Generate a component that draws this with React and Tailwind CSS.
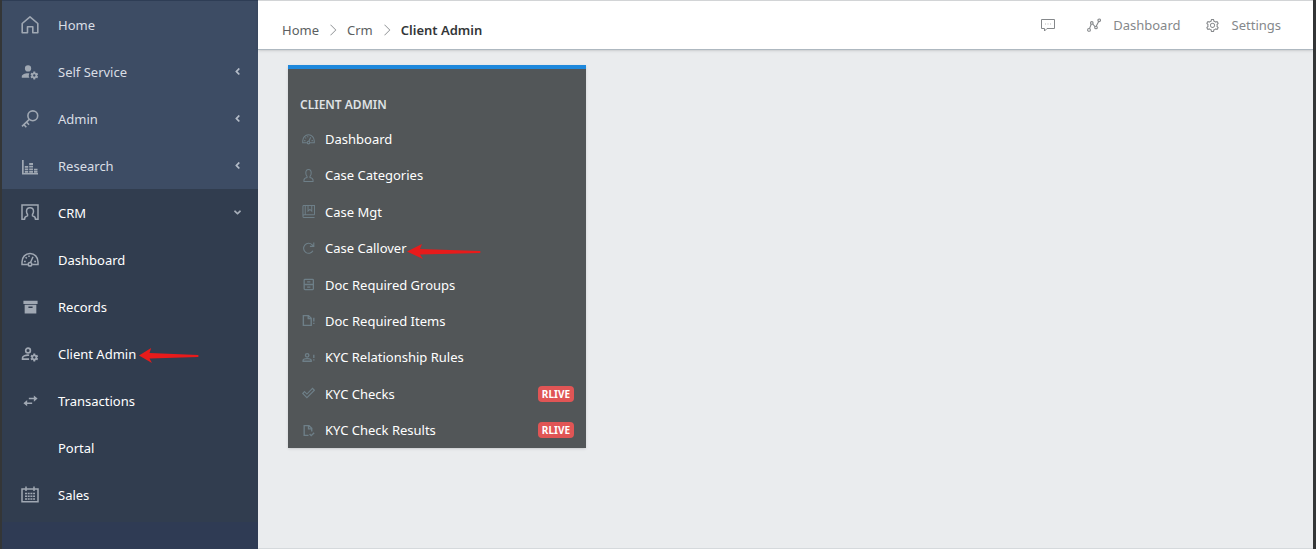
import React from "react";
import { TfiAngleRight } from "react-icons/tfi";
import { AiOutlineSetting } from "react-icons/ai";
import { FaAngleLeft, FaAngleDown } from "react-icons/fa";

const COG =
  "M17 12C16.87 12 16.76 12.09 16.74 12.21L16.55 13.53C16.25 13.66 15.96 13.82 15.7 14L14.46 13.5C14.35 13.5 14.22 13.5 14.15 13.63L13.15 15.36C13.09 15.47 13.11 15.6 13.21 15.68L14.27 16.5C14.25 16.67 14.24 16.83 14.24 17C14.24 17.17 14.25 17.33 14.27 17.5L13.21 18.32C13.12 18.4 13.09 18.53 13.15 18.64L14.15 20.37C14.21 20.5 14.34 20.5 14.46 20.5L15.7 20C15.96 20.18 16.24 20.35 16.55 20.47L16.74 21.79C16.76 21.91 16.86 22 17 22H19C19.11 22 19.22 21.91 19.24 21.79L19.43 20.47C19.73 20.34 20 20.18 20.27 20L21.5 20.5C21.63 20.5 21.76 20.5 21.83 20.37L22.83 18.64C22.89 18.53 22.86 18.4 22.77 18.32L21.7 17.5C21.72 17.33 21.74 17.17 21.74 17C21.74 16.83 21.73 16.67 21.7 16.5L22.76 15.68C22.85 15.6 22.88 15.47 22.82 15.36L21.82 13.63C21.76 13.5 21.63 13.5 21.5 13.5L20.27 14C20 13.82 19.73 13.65 19.42 13.53L19.23 12.21C19.22 12.09 19.11 12 19 12H17M18 15.5C18.83 15.5 19.5 16.17 19.5 17C19.5 17.83 18.83 18.5 18 18.5C17.16 18.5 16.5 17.83 16.5 17C16.5 16.17 17.17 15.5 18 15.5Z";

const Home = ({ className }) => (
  <svg viewBox="0 0 18 18" className={className} fill="none" stroke="currentColor" strokeWidth="1.6" strokeLinejoin="round">
    <path d="M1.200 7.500 9 .9l7.800 6.600v9.300h-5v-6H6.500v6H1.200z" />
  </svg>
);

const Key = ({ className }) => (
  <svg viewBox="0 0 18 18" className={className} fill="none" stroke="currentColor" strokeWidth="1.600">
    <circle cx="11.800" cy="5.800" r="4.900" />
    <path d="M8.300 9.400 1 16.300M2.800 14.500l2.500 2.700M5.500 12l2.500 2.700" />
  </svg>
);

const Gauge = ({ className }) => (
  <svg viewBox="0 0 18 18" className={className} fill="none" stroke="currentColor" strokeWidth="1.500">
    <path d="M6.800 13.500H1V11C1 6 4.500 2.500 9 2.500s8 3.500 8 8.500v2.500h-5.800" />
    <circle cx="9" cy="13.300" r="1.800" />
    <path d="M9.500 11.500 12 5.800M3 10.500h1.800M13.200 10.500H15M4.600 6.300l1.200 1.100M8 4.500V6" />
  </svg>
);

const Calendar = ({ className }) => (
  <svg viewBox="0 0 18 18" className={className} fill="none" stroke="currentColor" strokeWidth="1.500">
    <path d="M1 3h16v12.800H1zM5 .5v4.500M13 .5v4.500" />
    <path d="M4 7.500h10M4 10.200h10M4 12.900h10" strokeWidth="1.500" strokeDasharray="2 .7" />
  </svg>
);

const Archive = ({ className }) => (
  <svg viewBox="0 0 18 18" className={className} fill="currentColor">
    <path d="M.5 2h17v4H.5zM2 6.800h14V17.500H2zM6.500 9v1.700h5V9z" fillRule="evenodd" />
  </svg>
);

const UserCog = ({ className }) => (
  <svg viewBox="1 1 23 23" className={className} fill="currentColor">
    <path d={COG} />
    <path d="M10 4A4 4 0 0 0 10 12A4 4 0 0 0 10 4M10 14C5.58 14 2 15.79 2 18V20H11.68A7 7 0 0 1 11.64 14.09C11.11 14.03 10.56 14 10 14Z" />
  </svg>
);

const UserCogOutline = ({ className }) => (
  <svg viewBox="1 1 23 23" className={className} fill="currentColor">
    <path d={COG} />
    <g fill="none" stroke="currentColor" strokeWidth="2.1">
      <circle cx="10" cy="8" r="3" />
      <path d="M11.4 14.1C7 13.6 3 15.4 3 17.2V19H11.3" />
    </g>
  </svg>
);

const BarSteps = ({ className }) => (
  <svg viewBox="0 0 18 18" className={className} fill="currentColor">
    <path d="M1 3h1.700v13H17v1.500H1zM3.800 9h3.400v1.800H3.800zM3.800 11.500h3.400v1.800H3.800zM3.800 14h3.400v1.800H3.800zM8.200 6h3.800v1.900H8.200zM8.200 8.700h3.800v1.900H8.200zM8.200 11.400h3.800v1.900H8.200zM8.200 14h3.800v1.800H8.200zM13 11.800h3.500v1.700H13zM13 14h3.500v1.800H13z" />
  </svg>
);

const UserFrame = ({ className }) => (
  <svg viewBox="0 0 18 18" className={className} fill="none" stroke="currentColor" strokeWidth="1.5">
    <path d="M3.500 15.300H1V1h16v14.300h-2.500c0-1.800-.8-2.800-3-3.500v-1.500c.7-.8 1-1.800 1-3 0-2.300-1.500-3.600-3.500-3.600S5.500 5 5.500 7.300c0 1.200.3 2.200 1 3v1.500c-2.200.7-3 1.700-3 3.500Z" />
  </svg>
);

const Swap = ({ className }) => (
  <svg viewBox="0 0 18 18" className={className} fill="currentColor">
    <path d="M7 5.800h6V3l4.500 3.700L13 10.400V7.600H7zM11 11.300v1.800H5v2.800L.5 12.200 5 8.500v2.800z" />
  </svg>
);

const User = ({ className }) => (
  <svg viewBox="0 0 14 14" className={className} fill="none" stroke="currentColor" strokeWidth="1.100">
    <path d="M5.400 8C4.500 7 4.100 5.600 4.100 4.300 4.100 2 5.300.6 7 .6s2.900 1.400 2.900 3.700c0 1.300-.4 2.700-1.300 3.700v1.200c2.200.4 3.300 1.300 3.300 3v1.200H2.100v-1.200c0-1.700 1.100-2.600 3.300-3z" />
  </svg>
);

const Reload = ({ className }) => (
  <svg viewBox="0 0 14 14" className={className} fill="none" stroke="currentColor" strokeWidth="1.200">
    <path d="M11.800 9.500A5.400 5.400 0 1 1 11 3L12.500 4.500M12.700.5v4.200H8.500" />
  </svg>
);

const Comment = ({ className }) => (
  <svg viewBox="0 0 14 14" className={className} fill="none" stroke="currentColor" strokeWidth="1">
    <path d="M.5 1.500h13v9H6L3.500 13v-2.500h-3z" />
    <path d="M4 6h6.500" strokeDasharray="1 1.500" strokeOpacity=".6" />
  </svg>
);

const BookMark = ({ className }) => (
  <svg viewBox="0 0 14 14" className={className} fill="none" stroke="currentColor" strokeWidth="1.100">
    <path d="M13.500 10.500H2.500a1.500 1.500 0 0 0 0 3h11M1 12V1.500C1 1 1.500.5 2 .5h11.500v10M3.500.5v10M6.500.5v6l2-1.800 2 1.800v-6" />
  </svg>
);

const Cabinet = ({ className }) => (
  <svg viewBox="0 0 24 24" className={className} fill="none" stroke="currentColor" strokeWidth="2.400">
    <rect x="4" y="2.500" width="17" height="19" rx="1.500" />
    <path d="M4 12h17M9.500 7.300h6M9.500 16.700h6" />
  </svg>
);

const FileAlert = ({ className }) => (
  <svg viewBox="0 0 24 24" className={className} fill="none" stroke="currentColor" strokeWidth="2.600">
    <path d="M2.500 3h9.500l5 5v13H2.500zM11.500 3v5.500h5M21.800 7v7M21.800 16v2.500" />
  </svg>
);

const UserAlert = ({ className }) => (
  <svg viewBox="0 0 24 24" className={className} fill="none" stroke="currentColor" strokeWidth="2.500">
    <circle cx="9.500" cy="8" r="3.200" />
    <path d="M2 19v-1.500c0-2 4-3.500 7.500-3.500s7.500 1.500 7.500 3.500V19zM21.800 7v6M21.800 15v2.500" />
  </svg>
);

const CheckOutline = ({ className }) => (
  <svg viewBox="0 0 14 14" className={className} fill="none" stroke="currentColor" strokeWidth="1.200">
    <path d="M.8 7 2.700 5 5.300 7.600 11.300 1.500l2 2-8 8z" />
  </svg>
);

const FileCheck = ({ className }) => (
  <svg viewBox="0 0 24 24" className={className} fill="none" stroke="currentColor" strokeWidth="2.500">
    <path d="M12 21H4V3h9l5 5v6M12 3v6h6M14 18.500l3 3 5.500-5.500" />
  </svg>
);

const LineNodes = ({ className }) => (
  <svg viewBox="0 0 14 14" className={className} fill="none" stroke="currentColor" strokeWidth="1.100">
    <path d="M2.500 10.600 4.200 6.200M5.800 6 8 8.600M9.300 8.100 11.700 3.500" />
    <circle cx="2" cy="11.900" r="1.400" />
    <circle cx="4.800" cy="4.900" r="1.300" />
    <circle cx="9" cy="9.500" r="1.300" />
    <circle cx="12.200" cy="2.300" r="1.300" />
  </svg>
);

const mainLinks = [
  { label: "Home", Icon: Home },
  { label: "Self Service", Icon: UserCog, caret: true },
  { label: "Admin", Icon: Key, caret: true },
  { label: "Research", Icon: BarSteps, caret: true },
];

const crmLinks = [
  { label: "CRM", Icon: UserFrame, open: true },
  { label: "Dashboard", Icon: Gauge },
  { label: "Records", Icon: Archive, small: true },
  { label: "Client Admin", Icon: UserCogOutline, arrow: true },
  { label: "Transactions", Icon: Swap, small: true },
  { label: "Portal" },
  { label: "Sales", Icon: Calendar },
];

const menu = [
  { label: "Dashboard", Icon: Gauge },
  { label: "Case Categories", Icon: User },
  { label: "Case Mgt", Icon: BookMark },
  { label: "Case Callover", Icon: Reload, arrow: true },
  { label: "Doc Required Groups", Icon: Cabinet },
  { label: "Doc Required Items", Icon: FileAlert },
  { label: "KYC Relationship Rules", Icon: UserAlert },
  { label: "KYC Checks", Icon: CheckOutline, badge: "RLIVE" },
  { label: "KYC Check Results", Icon: FileCheck, badge: "RLIVE" },
];

const RedArrow = ({ className }) => (
  <svg viewBox="0 0 74 16" preserveAspectRatio="none" className={className} fill="#e81b1b">
    <path d="M0 7.500 15 0 13 5 73 7Q74 8 73 9L13 10.500 16 15z" />
  </svg>
);

function SideLink({ label, Icon, caret, open, small, arrow }) {
  return (
    <a href="#" className="flex h-[47px] items-center pr-[15px] pl-[19px]">
      <span className="flex w-[18px] justify-center text-[#a0a8b3]">
        {Icon && <Icon className={small ? "size-[15px]" : "size-[18px]"} />}
      </span>
      <span className="relative ml-[19px]">
        {label}
        {arrow && <RedArrow className="absolute top-1 left-full ml-[3px] h-4 w-[60px]" />}
      </span>
      {caret && <FaAngleLeft className="ml-auto size-[11px] text-[#b4bcc8]" />}
      {open && <FaAngleDown className="ml-auto size-[11px] text-[#a5adb8]" />}
    </a>
  );
}

export default function App() {
  return (
    <div className="flex min-h-screen border-r-[3px] border-l-2 border-[#343637] bg-[#eaecee] font-['Noto_Sans','Open_Sans',sans-serif] text-[13px] leading-5">
      <nav className="w-64 shrink-0 border-t border-[#2e3d55] bg-[#2f3b54]">
        <div className="bg-[#3d4c64] text-[#d9dee5]">
          {mainLinks.map((l) => (
            <SideLink key={l.label} {...l} />
          ))}
        </div>
        <div className="bg-[#313d4f] pb-1 text-white">
          {crmLinks.map((l) => (
            <SideLink key={l.label} {...l} />
          ))}
        </div>
      </nav>

      <div className="flex-1 border-b border-[#d5d9dc]">
        <header className="flex h-[50px] items-center justify-between border-t border-b border-t-[#d2d4d6] border-b-[#aeb8c0] bg-white pr-8 pl-6 shadow-sm">
          <nav aria-label="Breadcrumb" className="flex items-center pt-[10px] text-[#5c5f62]">
            <a href="#">Home</a>
            <TfiAngleRight className="mx-2 size-3 text-[#8b8f92]" />
            <a href="#">Crm</a>
            <TfiAngleRight className="mx-2 size-3 text-[#8b8f92]" />
            <span className="font-semibold text-[#333638]">Client Admin</span>
          </nav>
          <div className="flex items-center gap-6 text-[#85888b]">
            <button type="button" aria-label="Messages" className="mr-2">
              <Comment className="size-[14px]" />
            </button>
            <a href="#" className="flex items-center gap-3">
              <LineNodes className="size-[14px]" />
              Dashboard
            </a>
            <a href="#" className="flex items-center gap-3">
              <AiOutlineSetting className="size-[15px]" />
              Settings
            </a>
          </div>
        </header>

        <main className="px-[30px] pt-[15px]">
          <section className="flex min-h-[383px] w-[298px] flex-col border-t-4 border-[#1e88dc] bg-[#525658] px-3 pt-6 shadow-sm">
            <h2 className="text-[12px] leading-6 font-semibold text-[#dfe2e4]">CLIENT ADMIN</h2>
            <ul className="flex flex-1 flex-col justify-between pt-1 text-white">
              {menu.map(({ label, Icon, arrow, badge }) => (
                <li key={label}>
                  <a href="#" className="flex h-9 items-center">
                    <Icon className="ml-[2px] size-[13px] text-[#6e7f88]" />
                    <span className="relative ml-[10px]">
                      {label}
                      {arrow && <RedArrow className="absolute top-[6px] left-full h-4 w-[74px]" />}
                    </span>
                    {badge && (
                      <span className="ml-auto rounded bg-[#e05555] px-1 text-[10px] leading-4 font-bold">
                        {badge}
                      </span>
                    )}
                  </a>
                </li>
              ))}
            </ul>
          </section>
        </main>
      </div>
    </div>
  );
}
